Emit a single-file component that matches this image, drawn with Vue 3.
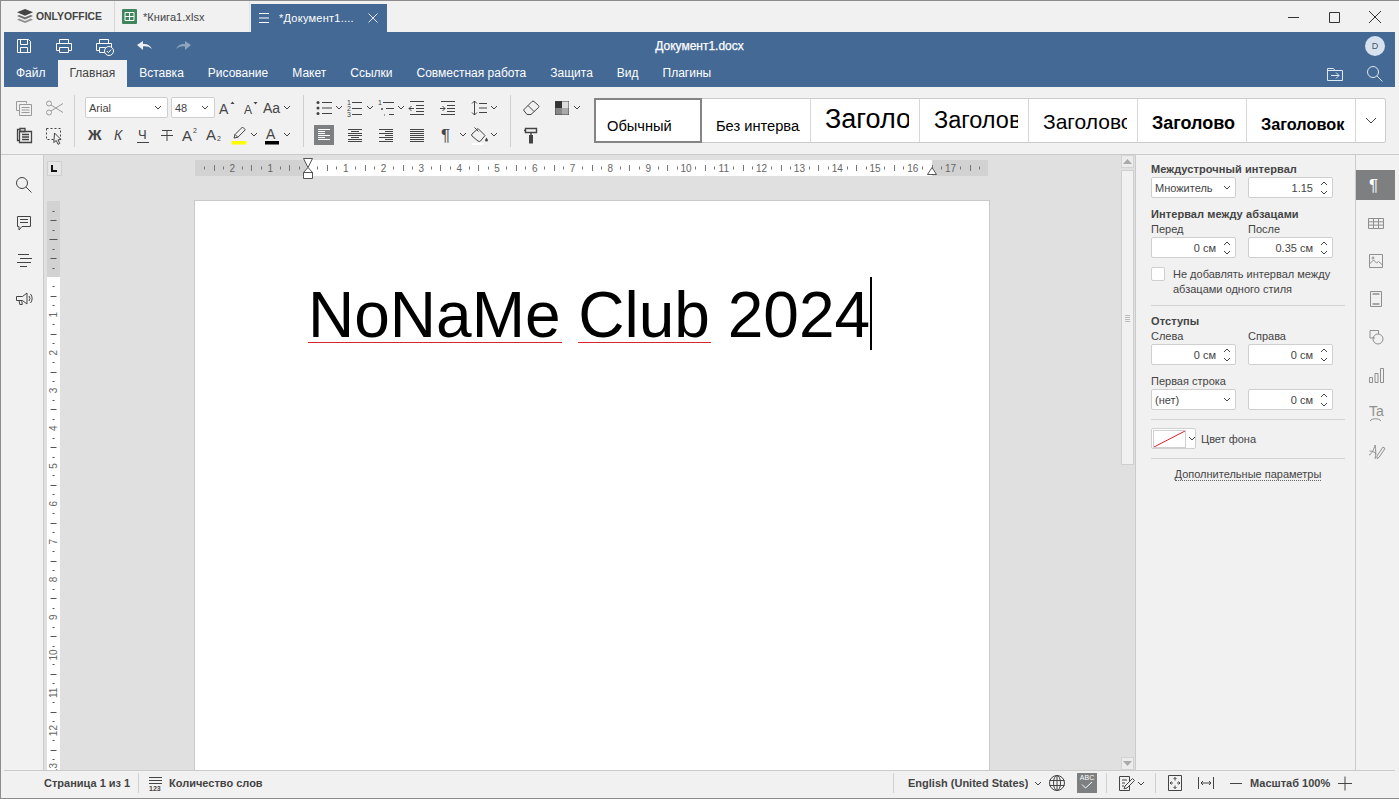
<script setup>
const txt = (s, x, y, size, extra = '') =>
  `<text x="${x}" y="${y}" font-size="${size}" font-family="Liberation Sans, Arial, sans-serif" fill="currentColor" stroke="none" ${extra}>${s}</text>`
const lines = (x1, x2, ys) => ys.map(y => `M${x1} ${y}H${x2}`).join('')
const I = {
  save: '<path d="M3.500 3.500h11l2 2v11h-13z"/><path d="M6.500 3.500v5h7v-5M6.500 16.500v-5h7v5"/>',
  print: '<path d="M5.500 7.500v-4h9v4M5.500 14.500h-3v-7h15v7h-3"/><path d="M5.500 11.500h9v5h-9z"/>',
  qprint: '<path d="M5.500 7.500v-4h9v4M5.500 14.500h-3v-7h15v7h-3"/><path d="M5.500 11.500h6v5h-6z"/><circle cx="15" cy="15" r="4.500" fill="#446995"/><path d="M12.800 15l1.600 1.600 2.800-3"/>',
  undo: '<path fill="currentColor" stroke="none" d="M3 9l6-4v3c4-.4 7 1 9 5-3-2.400-5.600-3-9-2.600V14z" opacity=".9"/>',
  redo: '<path fill="currentColor" stroke="none" d="M17 9l-6-4v3c-4-.4-7 1-9 5 3-2.400 5.600-3 9-2.600V14z"/>',
  folder: '<path d="M2.500 4.500h6l1.500 2h7.500v10h-15zM2.500 6.500h7.500"/><path d="M6 11.500h8M11 8.500l3 3-3 3"/>',
  search: '<circle cx="8" cy="8" r="5.500"/><path d="M12 12l5.500 5.500"/>',
  copy: '<path d="M2.500 3.500h10v2M2.500 3.500v9h3"/><path d="M5.500 6.500h12v11h-12z"/><path d="M7.500 9.500h8M7.500 12h8M7.500 14.500h8"/>',
  cut: '<circle cx="5" cy="5.500" r="2.500"/><circle cx="5" cy="14.500" r="2.500"/><path d="M7 7l12 7.500M7 13L19 5.500"/>',
  paste: '<path stroke-width="1.300" d="M5.500 15.500h-2v-11h2M6 3.500h5v3H6z"/><path stroke-width="1.300" d="M5.500 6.500h12v11h-12z"/><path stroke-width="1.300" d="M8 9.500h7M8 12h7M8 14.500h7"/>',
  select: '<path stroke-dasharray="2 2" d="M2.500 3.500h14v11h-14z"/><path fill="#f1f1f1" d="M10.500 8l6.500 6.500-3 .3 1.800 3.700-1.800.8-1.700-3.800-2.500 2z"/>',
  aup: txt('A', 2, 16, 14) + '<path fill="currentColor" stroke="none" d="M13.500 6l2-2.500 2 2.500z"/>',
  adown: txt('A', 4, 16, 12) + '<path fill="currentColor" stroke="none" d="M13.500 4h4l-2 2.500z"/>',
  aa: txt('Aa', 1, 15, 14),
  bold: txt('Ж', 3, 15, 15, 'font-weight="700"'),
  ital: txt('К', 5, 15, 14, 'font-style="italic"'),
  under: txt('Ч', 5, 14, 13) + '<path d="M4 17.500h12"/>',
  strike: '<path d="M5 5.500h10M10 5.500v10.500M4 10.500h12"/>',
  sup: txt('A', 1, 16, 15) + txt('2', 12, 8, 7),
  sub: txt('A', 1, 15, 15) + txt('2', 12, 16, 7),
  pen: '<path d="M5 13l1-3.500L13.500 2l2.800 2.800-7.500 7.500z"/><path d="M6 9.500l2.800 2.800"/><rect x="2.500" y="16" width="15" height="3.500" fill="#ffff00" stroke="none"/>',
  color: txt('A', 4, 14, 14) + '<rect x="3" y="16" width="14" height="3.500" fill="#000" stroke="none"/>',
  bul: '<circle cx="4" cy="4.500" r="1.500" fill="currentColor" stroke="none"/><circle cx="4" cy="10" r="1.500" fill="currentColor" stroke="none"/><circle cx="4" cy="15.500" r="1.500" fill="currentColor" stroke="none"/><path d="' + lines(8, 18, [4.5, 10, 15.5]) + '"/>',
  num: txt('1', 2, 7, 7) + txt('2', 2, 13, 7) + txt('3', 2, 19, 7) + '<path d="' + lines(7, 17, [4.5, 10.5, 16.5]) + '"/>',
  multi: txt('1', 2, 7, 7) + '<circle cx="6" cy="11" r="1" fill="currentColor" stroke="none"/><path stroke-dasharray="1 1.500" d="M8 17h2"/><path d="' + lines(7, 18, [4.5]) + lines(10, 18, [10.5]) + lines(13, 18, [16.5]) + '"/>',
  outd: '<path d="' + lines(3, 17, [3.5, 16.5]) + lines(9, 17, [7.5, 10.5, 13.5]) + '"/><path d="M7 10.500H2M4.500 8L2 10.500l2.500 2.500"/>',
  ind: '<path d="' + lines(3, 17, [3.5, 16.5]) + lines(9, 17, [7.5, 10.5, 13.5]) + '"/><path d="M2 10.500h5M4.500 8L7 10.500 4.500 13"/>',
  space: '<path d="M5.500 3v14M3 5.500L5.500 3 8 5.500M3 14.500L5.500 17 8 14.500"/><path d="' + lines(10, 18, [5.5, 10, 14.5]) + '"/>',
  al: '<path d="' + lines(4, 16, [4.5, 10.5, 14.5]) + lines(4, 11, [6.5, 8.5, 12.5]) + '"/>',
  ac: '<path d="' + lines(3, 17, [4.5, 10.5, 14.5]) + lines(6, 14, [6.5, 12.5]) + lines(3, 17, [8.5]) + lines(3, 17, [16.5]) + '"/>',
  ar: '<path d="' + lines(3, 17, [4.5, 8.5, 12.5, 16.5]) + lines(9, 17, [6.5, 10.5, 14.5]) + '"/>',
  aj: '<path d="' + lines(3, 17, [4.5, 6.5, 8.5, 10.5, 12.5, 14.5, 16.5]) + '"/>',
  para: txt('¶', 3, 16, 17),
  fill: '<path d="M3 9l6-5.500 7 7-4.500 5.500a2 2 0 01-2.500 0L3 11a1.500 1.500 0 010-2z"/><path d="M5.500 2.500l4 4"/><path fill="currentColor" stroke="none" d="M17.500 12.500l1.500 2.500a1.500 1.500 0 11-3 0z"/><rect x="3" y="18" width="11" height="2" fill="#fff" stroke="none"/>',
  erase: '<path d="M2.500 12L11 3.500a1.500 1.500 0 012 0l4.500 4a1.500 1.500 0 010 2L10 16.500H6z"/><path d="M7 7.500l6 6"/>',
  scheme: '<rect x="3.500" y="3.500" width="13" height="13" fill="#fff" stroke="#444"/><rect x="3.500" y="3.500" width="6.500" height="6.500" fill="#333" stroke="none"/><rect x="10" y="3.500" width="6.500" height="6.500" fill="#ddd" stroke="none"/><rect x="3.500" y="10" width="6.500" height="6.500" fill="#888" stroke="none"/><rect x="10" y="10" width="6.500" height="6.500" fill="#aaa" stroke="none"/>',
  paint: '<path fill="none" stroke-width="1.400" d="M4.500 3.500h11v4h-11z"/><path stroke-width="1.400" d="M3 5.500h1.500M10 7.500v3"/><rect x="8" y="10" width="4" height="8.500" fill="currentColor" stroke="none"/>',
  comment: '<path d="M3.500 3.500h13v10H8L5 17v-3.500H3.500z"/><path d="' + lines(6, 14, [6.5, 9.5]) + '"/>',
  nav: '<path d="' + lines(4, 15, [3.5]) + lines(6, 18, [7.5]) + lines(3, 17, [11.5]) + lines(6, 13, [15.5]) + '"/>',
  speak: '<path d="M2.500 7.500h6L13 4v11L8.500 11.500h-6zM5 11.500l.800 4h2.500l-.600-4"/><path d="M15 7a4 4 0 010 5M16.500 5a7 7 0 010 9"/>',
  words: '<path d="' + lines(3, 16, [4.5, 7.5, 10.5]) + '"/>' + txt('123', 3, 18, 7, 'font-weight="700"'),
  globe: '<circle cx="10" cy="10" r="7.500"/><ellipse cx="10" cy="10" rx="3.500" ry="7.500"/><path d="M10 2.500v15M2.500 7.500h15M2.500 12.500h15"/>',
  track: '<path d="M3.500 3.500h10v14h-10z"/><path d="M6 7h5M6 10h3M6 13h2"/><path fill="#f1f1f1" d="M9 13l7.500-7.500 2 2L11 15l-3 .8z"/>',
  fit: '<path d="M3.500 2.500h13v15h-13z"/><path d="M10 4.500v3M8.500 6L10 4.500 11.500 6M10 15.500v-3M8.500 14l1.500 1.500 1.500-1.500M5 10h3M6.500 8.500L5 10l1.500 1.500M15 10h-3M13.500 8.500L15 10l-1.500 1.500"/>',
  fitw: '<path d="M2.500 4v12M17.500 4v12M5 10h10M7 8l-2 2 2 2M13 8l2 2-2 2"/>',
  minus: '<path d="M4 10.500h12"/>',
  plus: '<path d="M3 10.500h14M10 3.500v14"/>',
  table: '<path d="M2.500 5.500h15v10h-15z"/><path d="M2.500 8.800h15M2.500 12.100h15M7.500 5.500v10M12.500 5.500v10" />',
  image: '<path d="M3.500 3.500h13v13h-13z"/><path d="M3.500 13l4-4 3 3 2-1.500 4 3.500"/><circle cx="7" cy="7" r="1"/>',
  header: '<path d="M4.500 2.500h11v15h-11z"/><path d="M6.500 5h7M6.500 15h7" stroke-width="1.500"/>',
  shape: '<path d="M9 11H4V3.500h8.500V7"/><circle cx="12" cy="12" r="5"/>',
  chart: '<path d="M3.500 12.500h3v5h-3zM9 8.500h3v9H9zM14.500 3.500h3v14h-3z"/>',
  art: txt('Ta', 3, 13, 14) + '<path d="M4 18c2-3 9-3 11 0"/>',
  sign: '<path d="M3 14c3-1 5-6 6-10 1 5 1 9 0 14M3.500 10c3 0 5 1 7 3"/><path d="M11 15l6-9 2 1.500-6 9-2 1z"/>',
  cl: '<path d="M4 4l12 12M16 4L4 16"/>',
  max: '<path d="M5.500 5.500h10v10h-10z"/>',
  mini: '<path d="M5 10.500h11"/>',
  burger: '<path d="M6 5.500h10M6 10h10M6 14.500h10"/>',
  cl2: '<path d="M5.500 5.500l9 9M14.500 5.500l-9 9"/>'
}

const menu = ['Файл', 'Главная', 'Вставка', 'Рисование', 'Макет', 'Ссылки', 'Совместная работа', 'Защита', 'Вид', 'Плагины']
const fmtRow = [
  { i: 'bold' }, { i: 'ital' }, { i: 'under' }, { i: 'strike' }, { i: 'sup' }, { i: 'sub' }, { i: 'pen', c: 1 }, { i: 'color', c: 1, n: 1 }
]
const paraTop = [{ i: 'bul', c: 1 }, { i: 'num', c: 1 }, { i: 'multi', c: 1 }, { i: 'outd' }, { i: 'ind' }, { i: 'space', c: 1 }]
const paraBot = [{ i: 'al', a: 1 }, { i: 'ac' }, { i: 'ar' }, { i: 'aj' }, { i: 'para', c: 1 }, { i: 'fill', c: 1 }]
const styles = [
  { t: 'Обычный', k: 's0' }, { t: 'Без интервала', k: 's1' }, { t: 'Заголовок 1', k: 's2' }, { t: 'Заголовок 2', k: 's3' },
  { t: 'Заголовок 3', k: 's4' }, { t: 'Заголовок 4', k: 's5' }, { t: 'Заголовок', k: 's6' }
]
const sideL = ['search', 'comment', 'nav', 'speak']
const sideR = ['para', 'table', 'image', 'header', 'shape', 'chart', 'art', 'sign']

const CM = 37.8
const Q = CM / 4
const hOrigin = 113
const vOrigin = 76
const hTicks = []
for (let n = -11; n <= 71; n++) {
  if (n % 4 === 0) continue
  hTicks.push({ x: Math.round(hOrigin + n * Q) + 0.5, h: n % 2 === 0 ? 6 : 3 })
}
const hNums = []
for (let n = -2; n <= 17; n++) {
  if (n !== 0) hNums.push({ x: hOrigin + n * CM, t: Math.abs(n) })
}
const vTicks = []
for (let n = -7; n <= 60; n++) {
  if (n % 4 === 0 && n !== -4) continue
  vTicks.push({ y: Math.round(vOrigin + n * Q) + 0.5, w: n === -4 ? 8 : n % 2 === 0 ? 6 : 2 })
}
const vNums = []
for (let n = 1; n <= 13; n++) vNums.push({ y: vOrigin + n * CM, t: n })
</script>

<template>
  <div class="win">
    <div class="titlebar">
      <div class="brand">
        <svg class="logo" viewBox="0 0 16 15"><path d="M8 0l8 3.300-8 3.400L0 3.300z" /><path d="M2.200 5.900L8 8.300l5.800-2.400L16 7 8 10.400 0 7z" opacity=".75" /><path d="M2.200 9.600L8 12l5.800-2.400L16 10.700 8 14.100 0 10.700z" opacity=".55" /></svg>
        <span>ONLYOFFICE</span>
      </div>
      <div class="doc-tab">
        <svg class="xl" viewBox="0 0 15 15"><rect width="15" height="15" rx="1" fill="#40865c" /><path d="M3 3.500h9v8H3zM3 7.500h9M7.500 3.500v8" fill="none" stroke="#fff" /></svg>
        <span>*Книга1.xlsx</span>
      </div>
      <div class="doc-tab on">
        <svg class="ic" viewBox="0 0 20 20" v-html="I.burger"></svg>
        <span class="on-name">*Документ1....</span>
        <svg class="ic on-x" viewBox="0 0 20 20" v-html="I.cl2"></svg>
      </div>
      <div class="winctl">
        <span><svg class="ic" viewBox="0 0 20 20" v-html="I.mini"></svg></span>
        <span><svg class="ic" viewBox="0 0 20 20" v-html="I.max"></svg></span>
        <span><svg class="ic" viewBox="0 0 20 20" v-html="I.cl"></svg></span>
      </div>
    </div>

    <div class="head">
      <div class="quick">
        <div class="qicons">
          <span><svg class="ic" viewBox="0 0 20 20" v-html="I.save"></svg></span>
          <span><svg class="ic" viewBox="0 0 20 20" v-html="I.print"></svg></span>
          <span><svg class="ic" viewBox="0 0 20 20" v-html="I.qprint"></svg></span>
          <span><svg class="ic" viewBox="0 0 20 20" v-html="I.undo"></svg></span>
          <span class="dim"><svg class="ic" viewBox="0 0 20 20" v-html="I.redo"></svg></span>
        </div>
        <div class="doc-title">Документ1.docx</div>
        <div class="avatar-wrap"><span class="avatar">D</span></div>
      </div>
      <div class="menu">
        <span v-for="(m, k) in menu" :key="m" class="mi" :class="{ cur: k === 1 }">{{ m }}</span>
        <div class="menu-r">
          <svg class="ic" viewBox="0 0 20 20" v-html="I.folder"></svg>
          <svg class="ic" viewBox="0 0 20 20" v-html="I.search"></svg>
        </div>
      </div>
    </div>

    <div class="toolbar">
      <div class="grp g1">
        <div class="row">
          <span class="t off"><svg class="ic" viewBox="0 0 20 20" v-html="I.copy"></svg></span>
          <span class="t off"><svg class="ic" viewBox="0 0 20 20" v-html="I.cut"></svg></span>
        </div>
        <div class="row">
          <span class="t"><svg class="ic" viewBox="0 0 20 20" v-html="I.paste"></svg></span>
          <span class="t"><svg class="ic" viewBox="0 0 20 20" v-html="I.select"></svg></span>
        </div>
      </div>
      <i class="sep s-a"></i>
      <div class="grp g2">
        <div class="row">
          <div class="combo font">Arial<svg class="chev" viewBox="0 0 8 5"><path d="M1 1l3 3 3-3" /></svg></div>
          <div class="combo size">48<svg class="chev" viewBox="0 0 8 5"><path d="M1 1l3 3 3-3" /></svg></div>
          <span class="t ml2"><svg class="ic" viewBox="0 0 20 20" v-html="I.aup"></svg></span>
          <span class="t ml3"><svg class="ic" viewBox="0 0 20 20" v-html="I.adown"></svg></span>
          <span class="t ml2"><svg class="ic" viewBox="0 0 20 20" v-html="I.aa"></svg><svg class="car" viewBox="0 0 8 5"><path d="M1 1l3 3 3-3" /></svg></span>
        </div>
        <div class="row fmt">
          <span v-for="b in fmtRow" :key="b.i" class="t" :class="{ nudge: b.n }">
            <svg class="ic" viewBox="0 0 20 20" v-html="I[b.i]"></svg>
            <svg v-if="b.c" class="car" viewBox="0 0 8 5"><path d="M1 1l3 3 3-3" /></svg>
          </span>
        </div>
      </div>
      <i class="sep s-b"></i>
      <div class="grp g3">
        <div class="row cols">
          <span v-for="b in paraTop" :key="b.i" class="t cell">
            <svg class="ic" viewBox="0 0 20 20" v-html="I[b.i]"></svg>
            <svg v-if="b.c" class="car" viewBox="0 0 8 5"><path d="M1 1l3 3 3-3" /></svg>
          </span>
        </div>
        <div class="row cols">
          <span v-for="b in paraBot" :key="b.i" class="t cell">
            <span class="box" :class="{ act: b.a }"><svg class="ic" viewBox="0 0 20 20" v-html="I[b.i]"></svg></span>
            <svg v-if="b.c" class="car" viewBox="0 0 8 5"><path d="M1 1l3 3 3-3" /></svg>
          </span>
        </div>
      </div>
      <i class="sep s-b"></i>
      <div class="grp g4">
        <div class="row gap11">
          <span class="t"><svg class="ic" viewBox="0 0 20 20" v-html="I.erase"></svg></span>
          <span class="t"><svg class="ic" viewBox="0 0 20 20" v-html="I.scheme"></svg><svg class="car" viewBox="0 0 8 5"><path d="M1 1l3 3 3-3" /></svg></span>
        </div>
        <div class="row">
          <span class="t"><svg class="ic" viewBox="0 0 20 20" v-html="I.paint"></svg></span>
        </div>
      </div>
      <div class="gallery">
        <div v-for="(s, k) in styles" :key="s.k" class="st" :class="[s.k, { picked: k === 0 }]"><span class="st-t">{{ s.t }}</span></div>
        <div class="more"><svg viewBox="0 0 12 7"><path d="M1 1l5 5 5-5" /></svg></div>
      </div>
    </div>

    <div class="main">
      <aside class="left">
        <span v-for="n in sideL" :key="n" class="lb"><svg class="ic" viewBox="0 0 20 20" v-html="I[n]"></svg></span>
      </aside>
      <div class="canvas">
        <div class="doc-area">
          <div class="top-row">
            <div class="corner"><i></i></div>
            <svg class="hruler" width="793" height="22" viewBox="0 0 793 22">
              <rect x="0" y="2" width="793" height="16" fill="#d2d2d2" />
              <rect x="113" y="2" width="624" height="16" fill="#fff" />
              <path v-for="(t, k) in hTicks" :key="k" :d="`M${t.x} ${10 - t.h / 2}v${t.h}`" stroke="#777" fill="none" />
              <text v-for="n in hNums" :key="n.t + '-' + n.x" :x="n.x" y="14" class="rn" text-anchor="middle">{{ n.t }}</text>
              <path d="M108.500 .5h9L113 9.500zM108.500 14.500L113 9.500l4.500 5zM108.500 14.500h9v6h-9z" fill="#fff" stroke="#555" />
              <path d="M737 9.500l4.500 7h-9z" fill="#fff" stroke="#555" />
            </svg>
          </div>
          <div class="bot-row">
            <svg class="vruler" width="13" height="569" viewBox="0 0 13 569">
              <rect width="13" height="569" fill="#fff" />
              <rect width="13" height="76" fill="#d2d2d2" />
              <path v-for="(t, k) in vTicks" :key="k" :d="`M${6.5 - t.w / 2} ${t.y}h${t.w}`" stroke="#555" fill="none" />
              <text v-for="n in vNums" :key="n.t" class="rn" text-anchor="middle" :transform="`translate(10 ${n.y}) rotate(-90)`">{{ n.t }}</text>
            </svg>
            <div class="page">
              <div class="line"><span class="sp">NoNaMe</span> <span class="sp">Club</span> 2024<i class="caret"></i></div>
            </div>
          </div>
        </div>
        <div class="scroll">
          <span class="arr"><svg viewBox="0 0 9 5"><path d="M0 5l4.500-5L9 5z" /></svg></span>
          <div class="thumb"><i></i></div>
          <span class="arr end"><svg viewBox="0 0 9 5"><path d="M0 0l4.500 5L9 0z" /></svg></span>
        </div>
      </div>
      <aside class="panel">
        <div class="h">Междустрочный интервал</div>
        <div class="f2 m1">
          <div class="fld sel">Множитель<svg class="chev" viewBox="0 0 8 5"><path d="M1 1l3 3 3-3" /></svg></div>
          <div class="fld spin">1.15<span class="sp-b"><svg viewBox="0 0 8 5"><path d="M1 4l3-3 3 3" /></svg><svg viewBox="0 0 8 5"><path d="M1 1l3 3 3-3" /></svg></span></div>
        </div>
        <div class="h m9">Интервал между абзацами</div>
        <div class="f2 m1 lab"><span>Перед</span><span>После</span></div>
        <div class="f2 m1">
          <div class="fld spin">0 см<span class="sp-b"><svg viewBox="0 0 8 5"><path d="M1 4l3-3 3 3" /></svg><svg viewBox="0 0 8 5"><path d="M1 1l3 3 3-3" /></svg></span></div>
          <div class="fld spin">0.35 см<span class="sp-b"><svg viewBox="0 0 8 5"><path d="M1 4l3-3 3 3" /></svg><svg viewBox="0 0 8 5"><path d="M1 1l3 3 3-3" /></svg></span></div>
        </div>
        <div class="chk m9"><i></i><span>Не добавлять интервал между абзацами одного стиля</span></div>
        <hr class="rule m8" />
        <div class="h m8">Отступы</div>
        <div class="f2 m1 lab"><span>Слева</span><span>Справа</span></div>
        <div class="f2 m1">
          <div class="fld spin">0 см<span class="sp-b"><svg viewBox="0 0 8 5"><path d="M1 4l3-3 3 3" /></svg><svg viewBox="0 0 8 5"><path d="M1 1l3 3 3-3" /></svg></span></div>
          <div class="fld spin">0 см<span class="sp-b"><svg viewBox="0 0 8 5"><path d="M1 4l3-3 3 3" /></svg><svg viewBox="0 0 8 5"><path d="M1 1l3 3 3-3" /></svg></span></div>
        </div>
        <div class="f2 m9 lab"><span>Первая строка</span></div>
        <div class="f2 m1">
          <div class="fld sel">(нет)<svg class="chev" viewBox="0 0 8 5"><path d="M1 1l3 3 3-3" /></svg></div>
          <div class="fld spin">0 см<span class="sp-b"><svg viewBox="0 0 8 5"><path d="M1 4l3-3 3 3" /></svg><svg viewBox="0 0 8 5"><path d="M1 1l3 3 3-3" /></svg></span></div>
        </div>
        <hr class="rule m9" />
        <div class="bgrow m8">
          <div class="swatch"><span class="sw"><svg viewBox="0 0 31 16" preserveAspectRatio="none"><path d="M0 16L31 0" stroke="#e01f2b" fill="none" /></svg></span><svg class="chev" viewBox="0 0 8 5"><path d="M1 1l3 3 3-3" /></svg></div>
          <span>Цвет фона</span>
        </div>
        <hr class="rule m9" />
        <div class="adv m8"><span>Дополнительные параметры</span></div>
      </aside>
      <aside class="tabs">
        <span v-for="(n, k) in sideR" :key="n" class="rb" :class="{ act: k === 0 }"><svg class="ic" viewBox="0 0 20 20" v-html="I[n]"></svg></span>
      </aside>
    </div>

    <div class="status">
      <span class="st-txt pg">Страница 1 из 1</span>
      <i class="vs"></i>
      <svg class="ic words" viewBox="0 0 20 20" v-html="I.words"></svg>
      <span class="st-txt wc">Количество слов</span>
      <div class="st-r">
        <i class="vs"></i>
        <span class="st-txt lang">English (United States)</span>
        <svg class="car lc" viewBox="0 0 8 5"><path d="M1 1l3 3 3-3" /></svg>
        <svg class="ic g" viewBox="0 0 20 20" v-html="I.globe"></svg>
        <span class="abc">ABC<svg viewBox="0 0 12 8"><path d="M1 3.500l3.500 3.500L11 1" /></svg></span>
        <i class="vs v9"></i>
        <svg class="ic g9" viewBox="0 0 20 20" v-html="I.track"></svg>
        <svg class="car" viewBox="0 0 8 5"><path d="M1 1l3 3 3-3" /></svg>
        <i class="vs v10"></i>
        <svg class="ic g9" viewBox="0 0 20 20" v-html="I.fit"></svg>
        <svg class="ic g11" viewBox="0 0 20 20" v-html="I.fitw"></svg>
        <svg class="ic g10" viewBox="0 0 20 20" v-html="I.minus"></svg>
        <span class="st-txt zoom">Масштаб 100%</span>
        <svg class="ic" viewBox="0 0 20 20" v-html="I.plus"></svg>
      </div>
    </div>
  </div>
</template>

<style scoped>
.win {
  width: 1399px; height: 799px; box-sizing: border-box; overflow: hidden;
  border: solid #8c8c8c; border-width: 1px 0 1px 1px; padding: 0 4px 0 3px;
  background: #f1f1f1; display: flex; flex-direction: column;
  font: 11px "Liberation Sans", Arial, sans-serif; color: #444;
}
.ic { width: 20px; height: 20px; display: block; flex: none; fill: none; stroke: currentColor; stroke-width: 1; }

.titlebar { height: 31px; flex: none; display: flex; }
.brand { width: 111px; height: 31px; display: flex; align-items: center; padding-left: 13px; box-sizing: border-box; border-right: 1px solid #d8d8d8; font-size: 10.4px; font-weight: 700; color: #444; }
.logo { width: 16px; height: 15px; fill: #444; margin-right: 3px; }
.doc-tab { width: 135px; display: flex; align-items: center; padding-left: 7px; box-sizing: border-box; font-size: 11px; letter-spacing: .05px; color: #444; border-right: 1px solid #e2e2e2; }
.xl { width: 15px; height: 15px; margin-right: 6px; }
.doc-tab.on { width: 136px; margin-top: 3px; margin-left: 1px; padding-left: 2px; background: #446995; color: #fff; border: 0; }
.on-name { margin-left: 6px; width: 84px; white-space: nowrap; letter-spacing: .25px; }
.on-x { opacity: .85; }
.winctl { margin-left: auto; display: flex; align-items: center; color: #333; }
.winctl span { width: 41px; display: flex; justify-content: center; }

.head { background: #446995; color: #fff; flex: none; height: 55px; }
.quick { height: 28px; display: grid; grid-template-columns: 1fr auto 1fr; align-items: center; }
.qicons { display: flex; }
.qicons span { width: 40px; display: flex; justify-content: center; }
.qicons .dim { opacity: .4; }
.doc-title { font-size: 12px; -webkit-text-stroke: .25px #fff; }
.avatar-wrap { display: flex; justify-content: flex-end; padding-right: 10px; }
.avatar { width: 20px; height: 20px; border-radius: 50%; background: #d7e2ee; color: #44566b; font-size: 9px; display: flex; align-items: center; justify-content: center; }
.menu { height: 27px; display: flex; font-size: 12px; }
.mi { padding: 0 12px; line-height: 27px; }
.mi.cur { background: #f1f1f1; color: #444; }
.menu-r { margin-left: auto; display: flex; gap: 20px; padding-right: 10px; align-items: center; color: #dfe7f0; }

.toolbar { flex: none; height: 68px; box-sizing: border-box; border-bottom: 1px solid #cbcbcb; display: flex; padding: 10px 9px 0 13px; margin: 0 -4px 0 -3px; }
.grp { display: flex; flex-direction: column; gap: 6px; }
.row { display: flex; height: 21px; align-items: center; }
.g1 .row { gap: 10px; }
.t { display: flex; align-items: center; height: 21px; }
.off { color: #9a9a9a; }
.sep { width: 1px; height: 52px; background: #d0d0d0; flex: none; }
.s-a { margin: -2px 10px 0 10px; }
.s-b { margin: -2px 10px 0 11px; }
.combo { height: 21px; box-sizing: border-box; border: 1px solid #cfcfcf; border-radius: 2px; background: #fff; display: flex; align-items: center; justify-content: space-between; padding: 0 5px 0 3px; font-size: 11px; }
.font { width: 83px; }
.size { width: 44px; margin-left: 3px; }
.chev { width: 8px; height: 5px; fill: none; stroke: #444; flex: none; }
.car { width: 8px; height: 5px; fill: none; stroke: #444; margin: 0 1px; flex: none; }
.ml2 { margin-left: 2px; }
.ml3 { margin-left: 3px; }
.fmt { gap: 4px; }
.nudge { margin-left: -1px; }
.cols { gap: 1px; }
.cell { width: 30px; }
.box { width: 20px; height: 20px; display: block; }
.box.act { background: #7d7f80; color: #fff; }
.gap11 { gap: 11px; }
.gallery { margin-left: 12px; width: 792px; height: 45px; margin-top: 1px; display: flex; background: #fff; border: 1px solid #cbcbcb; border-radius: 2px; box-sizing: border-box; color: #000; flex: none; }
.st { width: 109px; flex: none; box-sizing: border-box; border-right: 1px solid #d8d8d8; padding-left: 14px; display: flex; align-items: center; }
.st-t { display: block; width: 84px; overflow: hidden; white-space: nowrap; }
.picked { width: 108px; border: 2px solid #848484; margin: -1px 0 -1px -1px; height: 45px; padding-left: 11px; }
.s0 .st-t, .s1 .st-t { font-size: 14.67px; padding-top: 10px; }
.s2 .st-t { font-size: 27px; padding-bottom: 3px; }
.s3 .st-t { font-size: 23.5px; }
.s4 .st-t { font-size: 21px; padding-top: 2px; }
.s5 .st-t { font-size: 18px; font-weight: 700; padding-top: 6px; }
.s6 .st-t { font-size: 16.3px; font-weight: 700; padding-top: 7px; }
.more { flex: 1; display: flex; align-items: center; justify-content: center; }
.more svg { width: 12px; height: 7px; fill: none; stroke: #444; }

.main { flex: 1; min-height: 0; display: flex; }
.left { width: 40px; flex: none; box-sizing: border-box; border-right: 1px solid #cbcbcb; padding-top: 20px; display: flex; flex-direction: column; gap: 18px; align-items: center; }
.lb { display: block; }
.canvas { flex: 1; min-width: 0; display: flex; background: #e0e0e0; overflow: hidden; }
.doc-area { flex: 1; min-width: 0; overflow: hidden; }
.top-row { height: 21px; padding-top: 3px; box-sizing: border-box; display: flex; padding-left: 3px; }
.corner { width: 15px; height: 15px; flex: none; margin-top: 3px; box-sizing: border-box; border: 1px solid #cfcfcf; background: #e6e6e6; position: relative; }
.corner i { display: block; position: absolute; left: 3px; top: 3px; width: 6px; height: 7px; border: solid #111; border-width: 0 0 2px 2px; box-sizing: border-box; }
.hruler { margin-left: 133px; overflow: visible; flex: none; display: block; }
.rn { font-size: 10px; fill: #666; font-family: "Liberation Sans", Arial, sans-serif; }
.bot-row { display: flex; padding-left: 3px; margin-top: 24px; }
.vruler { margin-top: 1px; flex: none; display: block; }
.page { width: 796px; height: 570px; box-sizing: border-box; margin-left: 134px; background: #fff; border: solid #c9c9c9; border-width: 1px 1px 0 1px; padding: 77px 0 0 113px; flex: none; }
.line { font: 64px/74px "Liberation Sans", Arial, sans-serif; color: #000; white-space: pre; position: relative; display: inline-block; }
.sp { position: relative; display: inline-block; }
.sp::after { content: ""; position: absolute; left: 0; right: -1px; top: 64px; height: 1px; background: #d9232e; }
.caret { position: absolute; left: 100%; top: -1px; width: 2px; height: 73px; background: #000; }

.scroll { width: 14px; flex: none; display: flex; flex-direction: column; }
.arr { height: 13px; width: 13px; flex: none; display: flex; align-items: center; justify-content: center; background: #ececec; border: 1px solid #d3d3d3; box-sizing: border-box; }
.arr svg { width: 9px; height: 5px; fill: #aaa; }
.arr.end { margin-top: auto; }
.thumb { height: 295px; width: 13px; flex: none; margin-top: 2px; box-sizing: border-box; background: #f1f1f1; border: 1px solid #cfcfcf; position: relative; }
.thumb i { display: block; position: absolute; left: 3px; top: 144px; width: 5px; height: 7px; background: repeating-linear-gradient(#bbb 0 1px, transparent 1px 2px); }

.panel { width: 220px; flex: none; box-sizing: border-box; border-left: 1px solid #cbcbcb; padding: 7px 10px 0 15px; color: #444; }
.h { font-weight: 700; line-height: 14px; height: 14px; white-space: nowrap; letter-spacing: .08px; }
.m1 { margin-top: 1px; }
.m8 { margin-top: 8px; }
.m9 { margin-top: 9px; }
.f2 { display: flex; gap: 12px; }
.lab span { width: 85px; line-height: 14px; white-space: nowrap; }
.fld { width: 85px; height: 21px; box-sizing: border-box; background: #fff; border: 1px solid #cfcfcf; border-radius: 2px; display: flex; align-items: center; font-size: 11px; }
.sel { justify-content: space-between; padding: 0 4px 0 3px; }
.spin { justify-content: flex-end; }
.sp-b { width: 17px; margin-left: 2px; height: 19px; display: flex; flex-direction: column; align-items: center; justify-content: center; gap: 4px; flex: none; }
.sp-b svg { width: 8px; height: 5px; fill: none; stroke: #444; }
.chk { display: flex; gap: 8px; line-height: 15px; }
.chk i { width: 14px; height: 14px; box-sizing: border-box; background: #fff; border: 1px solid #cfcfcf; border-radius: 2px; flex: none; }
.chk span { width: 165px; }
.rule { border: 0; height: 1px; background: #d3d3d3; width: 194px; margin-bottom: 0; margin-left: 0; margin-right: 0; }
.rule.m8 { margin-top: 8px; }
.rule.m9 { margin-top: 9px; }
.bgrow { display: flex; align-items: center; gap: 5px; }
.swatch { width: 45px; height: 21px; box-sizing: border-box; background: #fff; border: 1px solid #cfcfcf; border-radius: 2px; display: flex; align-items: center; padding-left: 1px; gap: 2px; }
.sw { width: 31px; height: 16px; display: block; background: #fff; border: 1px solid #cfcfcf; }
.sw svg { width: 31px; height: 16px; display: block; }
.adv { text-align: center; width: 194px; line-height: 14px; }
.adv span { border-bottom: 1px dotted #666; }

.tabs { width: 40px; flex: none; box-sizing: border-box; border-left: 1px solid #cbcbcb; padding-top: 15px; display: flex; flex-direction: column; gap: 8px; color: #8f8f8f; }
.rb { height: 30px; display: flex; align-items: center; justify-content: center; width: 39px; }
.rb.act { background: #7d7f80; color: #fff; }

.status { flex: none; height: 28px; box-sizing: border-box; border-top: 1px solid #cbcbcb; display: flex; align-items: center; padding: 0 0 3px 40px; }
.st-txt { font-weight: 700; white-space: nowrap; color: #444; }
.pg { width: 94px; }
.vs { width: 1px; height: 20px; background: #d0d0d0; flex: none; display: block; }
.words { margin-left: 7px; }
.wc { margin-left: 3px; }
.st-r { margin-left: auto; display: flex; align-items: center; padding-right: 40px; }
.lang { width: 120px; margin-left: 14px; overflow: hidden; }
.lc { margin: 0 0 0 6px; }
.g { margin-left: 5px; }
.abc { width: 20px; height: 20px; margin-left: 10px; background: #7d7f80; color: #fff; font-size: 7px; line-height: 9px; text-align: center; display: block; }
.abc svg { display: block; width: 12px; height: 8px; margin: -1px auto 0; fill: none; stroke: #fff; }
.v9 { margin-left: 9px; }
.g9 { margin-left: 9px; }
.v10 { margin-left: 9px; }
.g11 { margin-left: 11px; }
.g10 { margin-left: 10px; }
.zoom { width: 81px; margin-left: 4px; margin-right: 4px; }
</style>

<style>
html, body { margin: 0; padding: 0; overflow: hidden; background: #f1f1f1; }
</style>
